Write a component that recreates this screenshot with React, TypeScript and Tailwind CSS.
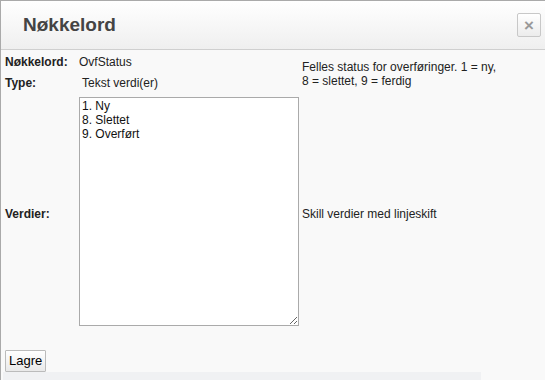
import React from "react";

const App: React.FC = () => {
    return (
        <div className="h-[380px] w-[545px] overflow-hidden bg-[#f9f9f9] font-['Liberation_Sans',Arial,sans-serif] text-[12px] text-[#222]">
            <div className="h-full border-l border-t border-[#aaa]">
                <div className="flex h-[49px] items-center justify-between border-b border-[#cfcfcf] bg-gradient-to-b from-white to-[#efefef] pl-[22px] pr-[4px]">
                    <h3 className="text-[19px] font-bold text-[#444]">Nøkkelord</h3>
                    <button className="flex h-[24px] w-[24px] items-center justify-center rounded-[2px] border border-[#c8c8c8] bg-gradient-to-b from-white to-[#ececec] text-[17px] font-bold leading-none text-[#999]">
                        ×
                    </button>
                </div>

                <div className="grid grid-cols-[74px_223px_1fr] px-[4px] pt-[1px]">
                    <div className="flex h-[21px] items-center font-bold">Nøkkelord:</div>
                    <div className="flex h-[21px] items-center">OvfStatus</div>
                    <div className="row-span-2 flex items-center pt-[3px] leading-[14px]">
                        Felles status for overføringer. 1 = ny,
                        <br />
                        8 = slettet, 9 = ferdig
                    </div>

                    <div className="flex h-[21px] items-center font-bold">Type:</div>
                    <div className="flex h-[21px] items-center pl-[3px]">Tekst verdi(er)</div>

                    <div className="flex items-center pt-[8px] font-bold">Verdier:</div>
                    <div className="pt-[4px]">
                        <textarea
                            className="block h-[229px] w-[220px] border border-[#aaa] bg-white px-[2px] pt-[1px] text-[12px] leading-[14px] text-[#111] outline-none"
                            defaultValue={"1. Ny\n8. Slettet\n9. Overført"}
                        />
                    </div>
                    <div className="flex items-center pt-[8px]">Skill verdier med linjeskift</div>
                </div>

                <div className="px-[4px] pt-[24px]">
                    <button className="h-[22px] rounded-[1px] border border-[#bbb] bg-gradient-to-b from-white to-[#e9e9e9] px-[3px] text-[13px] text-black">
                        Lagre
                    </button>
                </div>
                <div className="ml-[2px] h-[10px] w-[478px] bg-[#f0f1f3]" />
            </div>
        </div>
    );
};

export default App;
